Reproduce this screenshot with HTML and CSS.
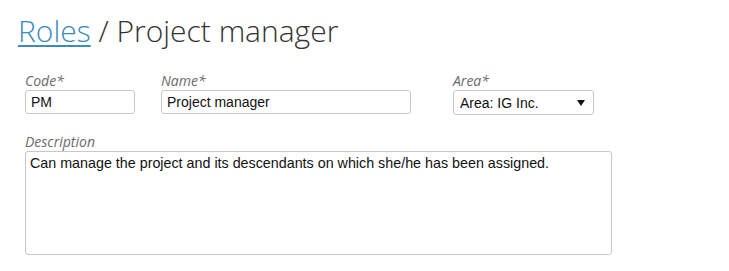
FILE: index.html
```html
<!DOCTYPE html>
<html>
<head>
<meta charset="utf-8">
<link rel="stylesheet" href="styles.css">
</head>
<body>
<div class="page">
  <h1 class="title"><a class="crumb" href="#">Roles</a> / Project manager</h1>
  <form class="form">
    <div class="row">
      <div class="field field-code">
        <label class="label">Code*</label>
        <input class="input code" type="text" value="PM">
      </div>
      <div class="field field-name">
        <label class="label">Name*</label>
        <input class="input name" type="text" value="Project manager">
      </div>
      <div class="field field-area">
        <label class="label">Area*</label>
        <div class="select-wrap">
          <select class="input select"><option>Area: IG Inc.</option></select>
          <span class="arrow"></span>
        </div>
      </div>
    </div>
    <div class="field field-desc">
      <label class="label">Description</label>
      <textarea class="input textarea">Can manage the project and its descendants on which she/he has been assigned.</textarea>
    </div>
  </form>
</div>
</body>
</html>
```
FILE: styles.css
```css
html, body { margin: 0; padding: 0; background: #fff; }
.page { padding: 10px 0 0 18px; }
.title {
  margin: 0;
  font-family: "Open Sans", sans-serif;
  font-weight: 300;
  font-size: 30px;
  line-height: 42px;
  color: #333;
}
.crumb {
  color: #3a8cbb;
  text-decoration: underline;
  text-decoration-thickness: 2px;
  text-underline-offset: 3px;
}
.form { padding: 19px 0 0 7px; }
.row { display: flex; }
.field { display: flex; flex-direction: column; }
.field-code { width: 136px; }
.field-name { width: 292px; }
.label {
  font-family: "Open Sans", sans-serif;
  font-style: italic;
  font-size: 14px;
  line-height: 19px;
  color: #6b6b6b;
}
.input {
  box-sizing: border-box;
  font-family: "Liberation Sans", Arial, sans-serif;
  font-size: 14px;
  color: #111;
  border: 1px solid #c8c8c8;
  border-radius: 3px;
  background: #fff;
  margin: 0;
  outline: none;
}
.code { width: 110px; height: 24px; padding: 0 5px; }
.name { width: 250px; height: 24px; padding: 0 5px; }
.select-wrap { position: relative; width: 141px; }
.select {
  -webkit-appearance: none;
  appearance: none;
  width: 141px;
  height: 25px;
  padding: 0 6px;
}
.arrow {
  position: absolute;
  right: 9px;
  top: 10px;
  width: 0; height: 0;
  border-left: 4px solid transparent;
  border-right: 4px solid transparent;
  border-top: 6px solid #111;
}
.field-desc { margin-top: 17px; }
.textarea {
  width: 587px;
  height: 104px;
  padding: 3px 4px;
  resize: none;
  font-size: 14.3px;
  line-height: 16px;
}
```
